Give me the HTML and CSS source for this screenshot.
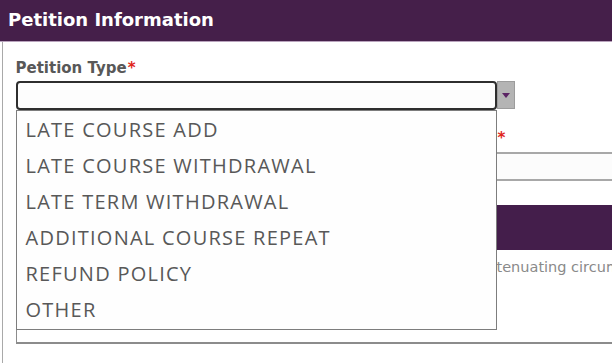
FILE: index.html
```html
<!DOCTYPE html>
<html>
<head>
<meta charset="utf-8">
<link rel="stylesheet" href="styles.css">
</head>
<body>
<div class="panel">
  <div class="panel-header">Petition Information</div>
  <div class="panel-body">
    <div class="field">
      <div class="label">Petition Type<span class="req">*</span></div>
      <div class="select-row">
        <div class="select-box"></div>
        <div class="select-btn"><span class="tri"></span></div>
        <ul class="dropdown">
          <li>LATE COURSE ADD</li>
          <li>LATE COURSE WITHDRAWAL</li>
          <li>LATE TERM WITHDRAWAL</li>
          <li>ADDITIONAL COURSE REPEAT</li>
          <li>REFUND POLICY</li>
          <li>OTHER</li>
        </ul>
      </div>
    </div>
    <div class="field field2">
      <div class="label"><span class="label-text">Term for which you are requesting this Petition</span><span class="req">*</span></div>
      <div class="text-input"></div>
    </div>
    <div class="subpanel">
      <div class="section-bar">Petition Details</div>
      <p class="hint">Please provide a detailed description of the reason(s) and the extenuating circumstances for this petition.</p>
    </div>
  </div>
</div>
</body>
</html>
```

FILE: styles.css
```css
html, body {
  margin: 0;
  padding: 0;
  background: #ffffff;
  overflow: hidden;
}
body {
  width: 612px;
  height: 363px;
  font-family: "DejaVu Sans", Verdana, sans-serif;
}
.panel {
  width: 612px;
  height: 363px;
  overflow: hidden;
}
.panel-header {
  height: 41px;
  background: #451f4a;
  border-bottom: 1px solid #b9a3bd;
  color: #ffffff;
  font-weight: bold;
  font-size: 18px;
  line-height: 39px;
  padding-left: 8px;
}
.panel-body {
  margin-left: 2px;
  border-left: 1.5px solid #a9a9a9;
  padding: 17px 0 0 12.5px;
  height: 321px;
  box-sizing: border-box;
}
.label {
  font-size: 15px;
  font-weight: bold;
  color: #585858;
  line-height: 18px;
  height: 18px;
  margin-bottom: 4px;
  white-space: nowrap;
}
.label-text {
  display: inline-block;
  width: 481px;
  overflow: hidden;
  vertical-align: top;
}
.req {
  color: #e0261b;
  margin-left: 1px;
}
.select-row {
  position: relative;
  display: flex;
  align-items: flex-start;
}
.select-box {
  width: 481px;
  height: 29px;
  box-sizing: border-box;
  border: 2px solid #2e2e2e;
  border-radius: 4px;
  background: #fdfdfd;
}
.select-btn {
  width: 18px;
  height: 28px;
  box-sizing: border-box;
  background: #b4b4b4;
  border: 1px solid #9c9c9c;
  display: flex;
  align-items: center;
  justify-content: center;
}
.tri {
  width: 0;
  height: 0;
  border-left: 4px solid transparent;
  border-right: 4px solid transparent;
  border-top: 5px solid #5b2464;
}
.dropdown {
  position: absolute;
  left: 0;
  top: 29px;
  width: 481px;
  height: 220px;
  box-sizing: border-box;
  margin: 0;
  padding: 1px 0 0 0;
  list-style: none;
  background: #fefefe;
  border: 1px solid #7d7d7d;
  z-index: 5;
  font-family: "Open Sans", "Noto Sans", sans-serif;
  font-size: 20px;
  letter-spacing: 1.25px;
  color: #585858;
}
.dropdown li {
  height: 36px;
  line-height: 36px;
  padding-left: 9px;
}
.field2 {
  margin-top: 19px;
}
.field2 .label {
  margin-bottom: 5px;
}
.text-input {
  height: 29px;
  margin-right: -40px;
  box-sizing: border-box;
  border: 2px solid #a8a8a8;
  background: #fcfcfc;
}
.subpanel {
  margin-top: 24px;
  margin-right: -40px;
  border-left: 1px solid #8c8c8c;
  border-bottom: 2px solid #8c8c8c;
  padding-bottom: 66px;
  overflow: hidden;
}
.section-bar {
  height: 45px;
  background: #441e4b;
  color: #ffffff;
  font-weight: bold;
  font-size: 15px;
  line-height: 45px;
  padding-left: 10px;
}
.hint {
  margin: 8px 0 0 0;
  padding-left: 10px;
  font-size: 14.5px;
  line-height: 18px;
  color: #8a8a8a;
  white-space: nowrap;
  overflow: hidden;
}
```
